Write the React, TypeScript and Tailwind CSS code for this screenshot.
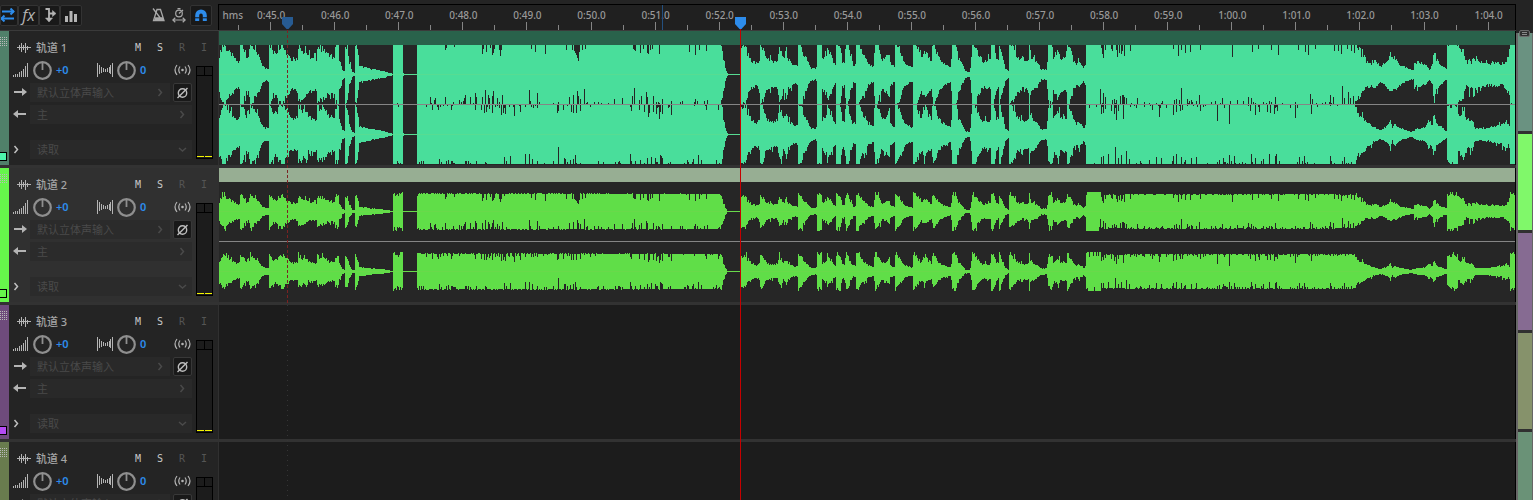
/* Multitrack editor: toolbar, time ruler, track headers and stereo clips. */

type Point = [number, number];

/* ---------- waveform data ---------- */

const CLIP_WIDTH = 1296;

// Each section is an origin plus [offset in thirds of a pixel, peak height] pairs.
const section = (origin: number, points: Point[]): Point[] =>
  points.map(([x, h]) => [origin + x / 3, h]);

const opening = section(-9, [
  [27, 19], [35, 28], [42, 30], [50, 25], [60, 21], [68, 18], [75, 15], [85, 12], [88, 13], [90, 31], [97, 31],
  [105, 19], [115, 18], [120, 31], [128, 29], [135, 21], [145, 19], [150, 13], [158, 8], [165, 6], [174, 6],
  [177, 8], [178, 32], [190, 21], [200, 22], [210, 29], [220, 30], [228, 21], [235, 21], [242, 15], [257, 15],
  [261, 16], [263, 29], [272, 27], [280, 23], [288, 22], [295, 18], [305, 16], [318, 15], [320, 16], [322, 29],
  [335, 25], [345, 23], [355, 19], [373, 17], [376, 28], [383, 32], [386, 16], [395, 5], [404, 2], [406, 29],
  [411, 27], [418, 11], [425, 2], [434, 1], [436, 32], [441, 24], [447, 8], [470, 6], [500, 4], [520, 3],
  [537, 1], [545, 0.4], [549, 0.4], [550, 34], [562, 30], [576, 35], [579, 0.5], [620, 0.4], [621, 0.5], [622, 33],
]);

const chorusEnd = section(281, [
  [650, 32], [660, 31], [667, 25], [670, 15], [675, 6], [681, 0.5], [720, 0.4], [721, 1], [722, 28], [735, 30],
  [742, 21], [750, 15], [765, 11], [775, 13], [778, 14], [779, 34], [787, 28], [795, 19], [802, 14], [818, 13],
  [832, 13], [836, 25], [842, 25], [850, 16], [857, 23], [865, 14], [880, 9], [893, 9], [894, 34], [900, 31],
]);

const verse = section(571, [
  [32, 30], [40, 20], [50, 13], [62, 6], [76, 5], [80, 8], [82, 34], [93, 32], [97, 15], [108, 20], [112, 26],
  [122, 19], [130, 12], [137, 9], [139, 34], [149, 33], [156, 13], [163, 12], [167, 34], [173, 31], [180, 17],
  [190, 8], [197, 10], [199, 34], [207, 32], [215, 22], [225, 17], [235, 10], [250, 7], [254, 34], [262, 28],
  [275, 15], [290, 18], [296, 24], [300, 11], [312, 7], [314, 34], [322, 30], [335, 18], [345, 10], [367, 7],
  [370, 34], [380, 27], [392, 16], [405, 23], [415, 17], [425, 13], [428, 34], [436, 26], [445, 17], [455, 12],
  [470, 9], [482, 7], [485, 34], [495, 33], [505, 17], [515, 10], [525, 3], [538, 2], [542, 10], [545, 34],
  [553, 31], [565, 20], [577, 13], [590, 13], [600, 15], [603, 34], [612, 29], [618, 17], [626, 13], [628, 32],
  [635, 20], [645, 6], [655, 3], [657, 34], [667, 27], [680, 18], [695, 14], [716, 13], [717, 34], [719, 34],
  [721, 17], [740, 12], [752, 5], [770, 5], [773, 28], [784, 32], [790, 18], [803, 24], [812, 15], [820, 18],
  [828, 16], [831, 34], [839, 27], [850, 14], [858, 10], [866, 13], [880, 6], [886, 10], [888, 34],
]);

const loud = section(861, [
  [0, 12], [6, 15], [11, 9], [17, 9], [18, 36], [60, 36], [62, 31], [68, 30], [75, 31], [90, 31], [110, 30], [130, 30],
  [136, 31.5], [690, 31.5],
]);

const fadeLeft = section(1081, [
  [60, 31.5], [110, 31], [140, 29], [150, 31], [166, 30], [168, 26], [180, 21], [195, 13], [215, 11], [225, 13],
  [240, 8], [255, 11], [268, 16], [285, 16], [300, 9], [320, 6], [340, 4], [342, 11], [355, 12], [378, 9],
  [388, 5], [396, 9], [400, 21], [407, 16], [420, 10], [438, 5], [440, 6], [441, 33], [472, 33], [478, 28],
  [488, 22], [500, 10], [507, 16], [512, 11], [520, 16], [540, 13], [570, 10], [590, 12], [605, 9], [625, 17],
  [629, 22], [630, 33], [646, 33],
]);

const fadeRight = section(1081, [
  [60, 31.5], [166, 31.5], [168, 23], [185, 17], [200, 13], [220, 7], [240, 4], [255, 7], [264, 10], [270, 15], [276, 6],
  [283, 11], [300, 6], [330, 2], [350, 5], [375, 7], [385, 13], [397, 10], [400, 19], [410, 10], [425, 7],
  [438, 3], [440, 4], [441, 30], [471, 32], [474, 17], [490, 23], [502, 14], [515, 15], [525, 6], [560, 6],
  [580, 8], [600, 9], [612, 12], [628, 9], [630, 33], [646, 33],
]);

const LEFT: Point[] = [...opening, ...chorusEnd, ...verse, ...loud, ...fadeLeft];
const RIGHT: Point[] = [...opening, ...chorusEnd, ...verse, ...loud, ...fadeRight];

// Narrow notches cut into the loud passages: [pixel, depth].
const NOTCHES: Point[][] = [
  [
    [226, 6], [227, 4], [235, 3], [263, 10], [264, 5], [267, 8], [271, 4], [273, 11], [274, 9], [275, 5], [280, 6],
    [281, 12], [282, 6], [285, 1], [312, 5], [316, 8], [326, 10], [347, 6], [353, 6], [355, 7], [356, 9], [357, 11],
    [358, 14], [359, 17], [360, 8], [363, 6], [366, 5], [414, 5], [415, 6], [416, 7], [421, 9], [424, 5], [428, 9],
    [429, 10], [431, 6], [433, 5], [440, 10], [470, 8], [476, 11], [480, 6], [487, 7], [882, 4], [883, 10], [884, 14],
    [886, 6], [892, 5], [893, 7], [897, 6], [898, 13], [900, 9], [902, 10], [903, 7], [905, 12], [911, 7], [954, 5],
    [959, 12], [962, 6], [966, 9], [971, 8], [981, 6], [1013, 13], [1033, 8], [1039, 5], [1052, 6], [1059, 11],
    [1079, 6], [1086, 8], [1089, 11], [1096, 5], [1115, 7], [1119, 7], [1122, 10], [1128, 5], [1132, 7], [1135, 9],
  ],
  [
    [211, 8], [215, 5], [216, 7], [226, 8], [240, 5], [245, 7], [246, 10], [251, 8], [256, 12], [257, 8], [263, 8],
    [266, 15], [269, 10], [270, 7], [273, 9], [274, 14], [278, 7], [283, 10], [310, 15], [318, 12], [350, 8],
    [354, 10], [358, 14], [359, 9], [361, 6], [365, 16], [395, 6], [403, 7], [413, 9], [415, 17], [420, 5], [422, 9],
    [427, 13], [428, 8], [434, 9], [443, 6], [476, 6], [478, 4], [488, 5], [881, 16], [884, 12], [886, 8], [893, 5],
    [895, 6], [897, 5], [901, 9], [903, 10], [904, 10], [905, 8], [907, 7], [918, 7], [955, 5], [957, 6], [960, 5],
    [962, 17], [968, 6], [972, 5], [977, 4], [980, 10], [1003, 7], [1018, 5], [1029, 8], [1032, 7], [1056, 8],
    [1091, 11], [1093, 6], [1111, 10], [1114, 8], [1123, 19], [1125, 7], [1129, 13], [1131, 7], [1134, 9],
  ],
  [
    [213, 6], [219, 6], [232, 6], [256, 6], [262, 6], [265, 9], [267, 8], [270, 5], [273, 9], [282, 11], [284, 9],
    [286, 10], [295, 12], [301, 8], [338, 9], [339, 7], [344, 6], [352, 8], [354, 9], [357, 9], [361, 7], [412, 7],
    [420, 6], [425, 8], [429, 13], [430, 9], [434, 8], [437, 10], [440, 15], [441, 8], [443, 10], [452, 11],
    [487, 6], [499, 6], [882, 10], [884, 9], [886, 5], [892, 7], [895, 10], [897, 16], [899, 7], [904, 15], [933, 6],
    [940, 13], [954, 11], [957, 8], [961, 7], [963, 6], [981, 7], [998, 17], [1010, 20], [1031, 7], [1036, 11],
    [1040, 8], [1048, 8], [1051, 9], [1055, 10], [1058, 7], [1076, 14], [1092, 10],
  ],
  [
    [204, 4], [220, 6], [229, 5], [246, 4], [285, 8], [291, 9], [306, 11], [310, 11], [313, 6], [339, 18], [345, 7],
    [346, 6], [351, 5], [354, 6], [356, 10], [400, 4], [411, 11], [421, 5], [428, 7], [432, 8], [436, 7], [441, 10],
    [442, 9], [443, 7], [468, 5], [474, 6], [479, 10], [482, 5], [497, 5], [882, 8], [884, 9], [889, 11], [896, 18],
    [899, 7], [902, 10], [907, 14], [910, 6], [930, 5], [937, 8], [942, 7], [954, 9], [957, 11], [962, 8], [966, 5],
    [972, 7], [977, 8], [1000, 5], [1004, 7], [1010, 10], [1015, 9], [1032, 11], [1036, 7], [1044, 6], [1050, 11],
    [1056, 9], [1057, 11], [1080, 8], [1085, 9], [1111, 9], [1125, 8],
  ],
];

function noise(x: number, seed: number) {
  const v = Math.sin(x * 12.9898 + seed * 78.233) * 43758.5453;
  return v - Math.floor(v);
}

function buildEdge(points: Point[], seed: number): number[] {
  const notches = new Map(NOTCHES[seed]);
  const edge: number[] = [];
  let i = 0;
  for (let x = 0; x < CLIP_WIDTH; x++) {
    while (i < points.length - 2 && points[i + 1][0] <= x + 0.5) i++;
    const [x0, h0] = points[i];
    const [x1, h1] = points[i + 1];
    const t = Math.min(1, Math.max(0, (x - x0) / Math.max(x1 - x0, 0.01)));
    let h = h0 + (h1 - h0) * t;
    const sustained = (x > 199 && x < 500) || (x > 868 && x < 1136);
    if (sustained) {
      h += noise(x, seed) * 2 - 1;
      if (seed > 0 && noise(x, seed + 9) > 0.86) h = Math.min(h, 29.5 - noise(x, seed + 5) * 4);
      const depth = notches.get(x);
      if (depth) h = Math.min(h, 29.5 - depth);
    } else if (h > 1.5) {
      h *= 0.84 + noise(x, seed) * 0.26;
      if (h > 8 && noise(x, seed + 3) > 0.9) h *= 1.3;
    }
    edge.push(Math.min(h, 36));
  }
  return edge;
}

const EDGES = [buildEdge(LEFT, 0), buildEdge(LEFT, 1), buildEdge(RIGHT, 2), buildEdge(RIGHT, 3)];

function channelPath(top: number[], bottom: number[], center: number, gain: number) {
  const size = (h: number) => Math.max(0.5, Math.min(29.5, Math.round(h * gain) + 0.5));
  let d = `M0 ${center}`;
  top.forEach((h, x) => (d += `V${center - size(h)}H${x + 1}`));
  d += `V${center}`;
  for (let x = bottom.length - 1; x >= 0; x--) d += `V${center + size(bottom[x])}H${x}`;
  return d + "Z";
}

function Waveform({ gain, color, axis }: { gain: number; color: string; axis: string }) {
  return (
    <svg className="block h-[120px] w-full" viewBox={`0 0 ${CLIP_WIDTH} 120`} preserveAspectRatio="none" shapeRendering="crispEdges" aria-hidden="true">
      <path d={channelPath(EDGES[0], EDGES[1], 29.5, gain)} fill={color} />
      <path d={channelPath(EDGES[2], EDGES[3], 89.5, gain)} fill={color} />
      <path d={`M0 29.5H${CLIP_WIDTH}M0 89.5H${CLIP_WIDTH}`} stroke={axis} strokeWidth="1" />
      <path d={`M0 59.5H${CLIP_WIDTH}`} stroke="#858585" strokeWidth="1" />
    </svg>
  );
}

/* ---------- icons ---------- */

const SwapIcon = () => (
  <svg width="16" height="14" viewBox="0 0 16 14" fill="none" stroke="#2d8ceb" strokeWidth="2">
    <path d="M1 3.5H13M0 10.5H13" />
    <path d="M9.5 0.5L12.5 3.5L9.5 6.5M3.5 7.5L0.5 10.5L3.5 13.5" />
  </svg>
);

const RouteIcon = () => (
  <svg width="14" height="15" viewBox="0 0 14 15" fill="none" stroke="#b4b4b4" strokeWidth="1.8">
    <path d="M2.500 1H6V10M6 5.500H10" />
    <path d="M9.500 2.500L13 5.500L9.500 8.500ZM2.500 10L6 14L9.500 10Z" fill="#b4b4b4" strokeWidth="0.500" />
  </svg>
);

const BarsIcon = () => (
  <svg width="12" height="13" viewBox="0 0 12 13" fill="#b4b4b4">
    <path d="M0 7h3v6H0zM4.500 2h3v11h-3zM9 5h3v8H9z" />
  </svg>
);

const MetronomeIcon = () => (
  <svg width="13" height="14" viewBox="0 0 13 14" fill="none" stroke="#a8a8a8" strokeWidth="1.300">
    <path d="M5 1.500H8.500L12 12.500H1.500L5 1.500Z" />
    <path d="M1 0.500L9.500 11.500M3 10H11M2.500 11.500H11.500" />
  </svg>
);

const StopwatchIcon = () => (
  <svg width="14" height="15" viewBox="0 0 14 15" fill="none" stroke="#a8a8a8" strokeWidth="1.2">
    <circle cx="7" cy="5.500" r="3.300" />
    <path d="M7 5.500L8.800 3.800M5.500 0.700H8.500M10 2L11 3M0.800 12H13.200M3.300 9.800L0.800 12L3.300 14.200M10.700 9.800L13.200 12L10.700 14.200" />
  </svg>
);

const MagnetIcon = () => (
  <svg width="12" height="13" viewBox="0 0 12 13" fill="none">
    <path d="M2.200 12V6.500C2.200 1 9.800 1 9.800 6.500V12" stroke="#2d8ceb" strokeWidth="4" />
    <path d="M0 8.800H4.500M7.500 8.800H12" stroke="#151515" strokeWidth="1" />
  </svg>
);

const TrackIcon = () => (
  <svg width="14" height="12" viewBox="0 0 14 12" stroke="#b4b4b4" strokeWidth="1" shapeRendering="crispEdges">
    <path d="M0 5.500H14M2.500 3V8M4.500 1V10M6.500 3V8M8.500 1V11M10.500 4V8" />
  </svg>
);

const VolumeIcon = () => (
  <svg width="16" height="14" viewBox="0 0 16 14" stroke="#b4b4b4" strokeWidth="1" shapeRendering="crispEdges">
    <path d="M0.500 12V14M2.500 11V14M4.500 11V14M6.500 9V14M8.500 8V14M10.500 6V14M12.500 3V14M14.500 0V14" />
  </svg>
);

const PanIcon = () => (
  <svg width="17" height="14" viewBox="0 0 17 14" stroke="#b4b4b4" strokeWidth="1" shapeRendering="crispEdges">
    <path d="M0.500 0V14M2.500 2V11M4.500 4V10M6.500 5V9M8.500 6V9M10.500 5V9M12.500 4V10M13.500 2V11M15.500 0V14" />
  </svg>
);

const Knob = () => (
  <svg width="20" height="20" viewBox="0 0 20 20" fill="none" stroke="#8f8f8f">
    <circle cx="9.500" cy="10.500" r="8.300" strokeWidth="2.200" />
    <path d="M9.500 2.500V10" strokeWidth="1.800" />
  </svg>
);

const MonitorIcon = () => (
  <svg width="17" height="12" viewBox="0 0 17 12" fill="none" stroke="#b4b4b4" strokeWidth="1.200">
    <path d="M3 1Q-1 6 3 11M6 2.500Q3.500 6 6 9.500M11 2.500Q13.500 6 11 9.500M14 1Q18 6 14 11" />
    <circle cx="8.500" cy="6" r="1.300" fill="#b4b4b4" stroke="none" />
  </svg>
);

const Arrow = ({ back = false }: { back?: boolean }) => (
  <svg width="13" height="9" viewBox="0 0 13 9" fill="#b4b4b4">
    <path d={back ? "M0 4L5 0V3H13V5H5V8Z" : "M13 4L8 0V3H0V5H8V8Z"} />
  </svg>
);

const PhaseIcon = () => (
  <svg width="12" height="12" viewBox="0 0 12 12" fill="none" stroke="#bdbdbd" strokeWidth="1.400">
    <circle cx="5.500" cy="6" r="4.200" />
    <path d="M0.500 11L10.500 1" />
  </svg>
);

const Chevron = ({ down = false, color = "#4a4a4a" }: { down?: boolean; color?: string }) => (
  <svg width="9" height="9" viewBox="0 0 9 9" fill="none" stroke={color} strokeWidth="1.500">
    <path d={down ? "M1 3L4.500 6L8 3" : "M2.500 1L5.500 4.500L2.500 8"} />
  </svg>
);

/* ---------- track controls ---------- */

function Dropdown({ label, value, down, selected }: { label: string; value: string; down?: boolean; selected?: boolean }) {
  return (
    <div className={`grid h-[19px] flex-1 items-center ${selected ? "bg-[#2b2b2b]" : "bg-[#292929]"}`}>
      <select aria-label={label} className="col-start-1 row-start-1 h-[19px] w-full appearance-none bg-transparent pl-[7px] text-[11px] leading-[19px] text-[#4a4a4a] outline-none">
        <option>{value}</option>
      </select>
      <span className="pointer-events-none col-start-1 row-start-1 justify-self-end pr-[5px]">
        <Chevron down={down} />
      </span>
    </div>
  );
}

function Meter({ color }: { color: string }) {
  return (
    <div className="mt-2 flex h-[93px] w-[17px] flex-col border border-black bg-[#1c1c1c]">
      <div className="grid h-[9px] grid-cols-2 border-b border-black">
        <span className="border-r border-black" />
      </div>
      <div className="mb-px grid flex-1 grid-cols-2 items-end gap-px">
        <span className={`h-px ${color}`} />
        <span className={`h-px ${color}`} />
      </div>
    </div>
  );
}

interface Track {
  name: string;
  strip: string;
  square: string;
  meter: string;
  selected?: boolean;
  clip?: { header: string; wave: string; axis: string; gain: number };
}

const TRACKS: Track[] = [
  { name: "轨道 1", strip: "bg-[#50806a]", square: "bg-[#4cf5ac]", meter: "bg-[#f5f500]", clip: { header: "bg-[#29624b]", wave: "#49de9b", axis: "#57dc92", gain: 1 } },
  { name: "轨道 2", strip: "bg-[#66f74b]", square: "bg-[#66f74b]", meter: "bg-[#f5f500]", selected: true, clip: { header: "bg-[#97ae93]", wave: "#60de48", axis: "#69d94a", gain: 0.53 } },
  { name: "轨道 3", strip: "bg-[#6e4b7c]", square: "bg-[#b54bf5]", meter: "bg-[#f5f500]" },
  { name: "轨道 4", strip: "bg-[#697c4e]", square: "bg-[#cdf54b]", meter: "bg-[#f5f500]" },
];

const switches = [
  { key: "M", title: "静音", tone: "text-[#c8c8c8]" },
  { key: "S", title: "独奏", tone: "text-[#c8c8c8]" },
  { key: "R", title: "录制准备", tone: "text-[#555555]" },
  { key: "I", title: "监视输入", tone: "text-[#555555]" },
];

function TrackHeader({ track }: { track: Track }) {
  const { selected } = track;
  return (
    <div className={`flex w-[219px] shrink-0 border-r border-[#303030] ${selected ? "bg-[#303030]" : "bg-[#242424]"}`}>
      <div className={`flex w-[9px] shrink-0 flex-col justify-between ${track.strip}`}>
        <svg className="mt-[6px]" width="8" height="10" shapeRendering="crispEdges" aria-hidden="true">
          {[0, 2, 4, 6].flatMap((x) => [0, 2, 4, 6, 8].map((y) => <rect key={`${x}-${y}`} x={x} y={y} width="1" height="1" fill="#b9b9b9" />))}
        </svg>
        <span className={`mb-1 h-[9px] w-[7px] border border-l-0 border-black ${track.square}`} />
      </div>
      <div className="flex flex-1 flex-col pt-[7px]">
        <div className="flex h-5 items-center pr-[3px] pl-2">
          <TrackIcon />
          <span className="ml-[5px] flex-1 text-[11px] leading-5 font-medium text-[#a4a4a4]">{track.name}</span>
          {switches.map((s) => (
            <button key={s.key} type="button" aria-label={s.title} className={`w-[22px] text-center font-['DejaVu_Sans_Mono',monospace] text-[10px] leading-5 ${s.tone}`}>
              {s.key}
            </button>
          ))}
        </div>
        <div className="flex">
          <div className="flex w-[187px] flex-col pt-[2px]">
            <div className="flex h-5 items-center pl-1 text-[11px] font-semibold text-[#2d8ceb]">
              <VolumeIcon />
              <button type="button" aria-label="音量" className="ml-1"><Knob /></button>
              <span className="ml-[3px] w-[41px]">+0</span>
              <PanIcon />
              <button type="button" aria-label="声像" className="ml-[3px]"><Knob /></button>
              <span className="ml-[3px] flex-1">0</span>
              <button type="button" aria-label="监视" className="mr-[5px]"><MonitorIcon /></button>
            </div>
            <div className="mt-[3px] flex h-[19px] items-center pr-1 pl-[5px]">
              <span className="w-4"><Arrow /></span>
              <Dropdown label="输入" value="默认立体声输入" selected={selected} />
              <button type="button" aria-label="反转相位" className="ml-[3px] grid size-[19px] place-items-center rounded-[2px] border border-[#383838] bg-[#191919]">
                <PhaseIcon />
              </button>
            </div>
            <div className="mt-[3px] flex h-[19px] items-center pr-1 pl-1">
              <span className="w-[17px]"><Arrow back /></span>
              <Dropdown label="输出" value="主" selected={selected} />
            </div>
            <div className="mt-4 flex h-[19px] items-center pr-1 pl-[3px]">
              <button type="button" aria-label="展开" className="w-[18px]"><Chevron color="#c0c0c0" /></button>
              <Dropdown label="自动化模式" value="读取" down selected={selected} />
            </div>
          </div>
          <Meter color={track.meter} />
        </div>
      </div>
    </div>
  );
}

function TrackRow({ track }: { track: Track }) {
  const { clip } = track;
  return (
    <section className="flex h-[137px] shrink-0 border-b-[3px] border-[#323232]">
      <TrackHeader track={track} />
      <div className={`min-w-0 flex-1 border-r border-black ${clip ? "bg-[#262626]" : "bg-[#1c1c1c]"}`}>
        {clip && (
          <>
            <div className={`h-[14px] ${clip.header}`} />
            <Waveform gain={clip.gain} color={clip.wave} axis={clip.axis} />
          </>
        )}
      </div>
    </section>
  );
}

/* ---------- ruler and toolbar ---------- */

const TIMES = [
  "0:45.0", "0:46.0", "0:47.0", "0:48.0", "0:49.0", "0:50.0", "0:51.0", "0:52.0", "0:53.0", "0:54.0",
  "0:55.0", "0:56.0", "0:57.0", "0:58.0", "0:59.0", "1:00.0", "1:01.0", "1:02.0", "1:03.0", "1:04.0",
];

function Ruler() {
  return (
    <div className="mt-1 flex min-w-0 flex-1 overflow-hidden border-x border-t border-black bg-[#202020] text-[10px] leading-5 font-medium text-[#999999]">
      <div className="flex w-[1.55%] shrink-0 flex-col justify-between">
        <span className="flex w-6 justify-end">hms</span>
        <span className="h-[5px] border-r border-[#858585]" />
      </div>
      {TIMES.map((time) => (
        <div key={time} className="flex w-[4.945%] shrink-0 flex-col justify-between">
          <span className="-mb-3 text-center">{time}</span>
          <div className="grid grid-cols-2 items-end">
            <span className="h-2 border-r border-[#858585]" />
            <span className="h-[5px] border-r border-[#858585]" />
          </div>
        </div>
      ))}
    </div>
  );
}

const toolButton = "grid h-[21px] place-items-center rounded-[2px] border border-[#333333] bg-[#191919]";

function Toolbar() {
  return (
    <div className="flex w-[218px] shrink-0 items-center pr-[6px]">
      <button type="button" aria-label="输入/输出" className={`${toolButton} w-[18px]`}><SwapIcon /></button>
      <button type="button" aria-label="效果" className={`${toolButton} w-[21px] font-['Open_Sans','Noto_Sans',sans-serif] text-[16px] leading-none text-[#b4b4b4] italic`}>fx</button>
      <button type="button" aria-label="发送" className={`${toolButton} w-[21px]`}><RouteIcon /></button>
      <button type="button" aria-label="EQ" className={`${toolButton} w-[22px]`}><BarsIcon /></button>
      <div className="ml-auto flex items-center">
        <button type="button" aria-label="节拍器" className="mr-[7px]"><MetronomeIcon /></button>
        <button type="button" aria-label="时间伸缩" className="mr-[4px]"><StopwatchIcon /></button>
        <button type="button" aria-label="对齐" className={`${toolButton} w-[22px]`}><MagnetIcon /></button>
      </div>
    </div>
  );
}

const Marker = ({ color }: { color: string }) => (
  <svg className="block" width="11" height="12" viewBox="0 0 11 12" aria-hidden="true">
    <path d="M0 0H11V7L6.500 12H4.500L0 7Z" fill={color} />
  </svg>
);

function Playheads() {
  return (
    <div className="pointer-events-none absolute inset-y-0 right-0 left-[219px] overflow-hidden">
      <span className="absolute top-[5px] left-[34.16%] h-[25px] w-px bg-[#24507f]" />
      <div className="absolute inset-y-0 left-[5.25%] flex w-px flex-col items-center pt-[17px]">
        <Marker color="#275b92" />
        <svg className="mt-px h-[275px] w-px shrink-0" shapeRendering="crispEdges">
          <line x1="0.5" x2="0.5" y1="0" y2="275" stroke="#7b2222" strokeDasharray="3 2" />
        </svg>
        <svg className="h-full w-px" shapeRendering="crispEdges">
          <line x1="0.5" x2="0.5" y1="0" y2="100%" stroke="#353535" strokeDasharray="1 4" />
        </svg>
      </div>
      <div className="absolute inset-y-0 left-[40.18%] flex w-px flex-col items-center pt-[17px]">
        <Marker color="#2d8ceb" />
        <span className="w-px flex-1 bg-[#c60000]" />
      </div>
    </div>
  );
}

function Navigator() {
  return (
    <aside className="flex w-[17px] shrink-0 flex-col bg-[#242424] pt-[30px]">
      <div className="z-10 mx-[3px] flex h-[7px] flex-col justify-center gap-px rounded-[2px] border border-[#6b6b6b] bg-[#303030] px-[2px]">
        <span className="h-px bg-[#8a8a8a]" />
        <span className="h-px bg-[#8a8a8a]" />
      </div>
      <div className="-mt-1 flex min-h-0 flex-1 flex-col gap-[3px] overflow-hidden border-r border-l-2 border-[#666666] bg-[#303030]">
        <span className="h-[98px] shrink-0 bg-[#6a9281]" />
        <span className="h-24 shrink-0 bg-[#80f86a]" />
        <span className="h-[97px] shrink-0 bg-[#866b92]" />
        <span className="h-24 shrink-0 bg-[#86926b]" />
        <span className="h-24 shrink-0 bg-[#6a9277]" />
      </div>
    </aside>
  );
}

export default function App() {
  return (
    <main className="flex h-screen overflow-hidden bg-[#242424] font-['Noto_Sans','Noto_Sans_CJK_SC',sans-serif] [&_svg]:shrink-0">
      <div className="relative flex min-w-0 flex-1 flex-col overflow-hidden">
        <header className="flex h-[31px] shrink-0 border-b border-[#3a3a3a]">
          <Toolbar />
          <Ruler />
        </header>
        {TRACKS.map((track) => (
          <TrackRow key={track.name} track={track} />
        ))}
        <Playheads />
      </div>
      <Navigator />
    </main>
  );
}
